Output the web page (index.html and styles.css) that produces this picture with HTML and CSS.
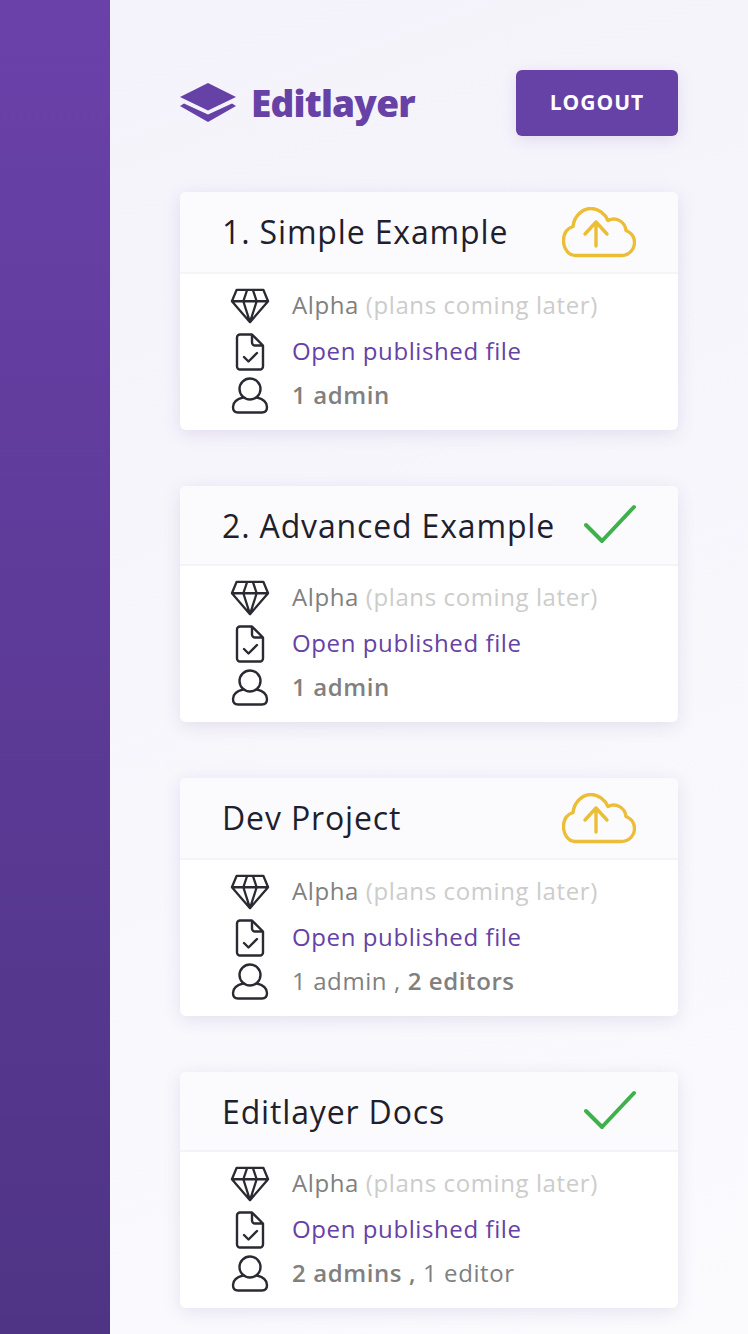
FILE: index.html
```html
<!DOCTYPE html>
<html lang="en">
<head>
    <meta charset="UTF-8">
    <meta name="viewport" content="width=device-width, initial-scale=1.0">
    <title>Editlayer</title>
    <link rel="stylesheet" href="styles.css">
</head>
<body>
    <svg class="defs" width="0" height="0">
        <symbol id="gem" viewBox="0 0 42 38">
            <path d="M7 2h28l5 12-19 22L2 14z M2 14h38 M14 14l7 22 7-22 M14 14l4-12 M28 14l-4-12" fill="none" stroke="currentColor" stroke-width="2.400" stroke-linejoin="round"/>
        </symbol>
        <symbol id="file" viewBox="0 0 30 38">
            <path d="M5 1.500h12l11 11v21a3 3 0 0 1-3 3H5a3 3 0 0 1-3-3v-29a3 3 0 0 1 3-3z M17 1.500v8a3 3 0 0 0 3 3h8" fill="none" stroke="currentColor" stroke-width="2.400" stroke-linejoin="round"/>
            <path d="M9 24l4.500 4.500L22 20" fill="none" stroke="currentColor" stroke-width="2.400" stroke-linecap="round" stroke-linejoin="round"/>
        </symbol>
        <symbol id="user" viewBox="0 0 38 37">
            <circle cx="19" cy="12" r="10.500" fill="none" stroke="currentColor" stroke-width="2.400"/>
            <path d="M12 20.500C6 22 2 25 2 30c0 3.500 2 5.500 5 5.500h24c3 0 5-2 5-5.500 0-5-4-8-10-9.500" fill="none" stroke="currentColor" stroke-width="2.400" stroke-linecap="round"/>
        </symbol>
        <symbol id="cloud" viewBox="0 0 74 52">
            <path d="M13 48.500h46c8 0 13.500-6 13.500-13 0-6-3.500-10-8.500-12-1-9-10-14-18-10-3-7-10-12-17-12-9 0-17 8-18 18-6 2-9.500 7-9.500 14 0 8 5 15 11.500 15z" fill="none" stroke="currentColor" stroke-width="3.400" stroke-linejoin="round"/>
            <path d="M34 39V15 M23 27l11-12 11 12" fill="none" stroke="currentColor" stroke-width="3.400" stroke-linecap="round" stroke-linejoin="round"/>
        </symbol>
        <symbol id="check" viewBox="0 0 52 40">
            <path d="M2 21l16 16L50 3" fill="none" stroke="currentColor" stroke-width="4" stroke-linecap="round" stroke-linejoin="round"/>
        </symbol>
    </svg>

    <div class="layout">
        <aside class="sidebar"></aside>
        <main class="main">
            <header class="topbar">
                <div class="logo">
                    <svg class="logo-icon" viewBox="0 0 56 40">
                        <path d="M28 0l28 14-28 13.500L0 14z" fill="#6641a6"/>
                        <path d="M0 23l4-2.500 24 11 24-11 4 2.500-28 16z" fill="#6641a6"/>
                    </svg>
                    <span class="logo-text">Editlayer</span>
                </div>
                <button class="logout">LOGOUT</button>
            </header>

            <section class="card">
                <div class="card-head head-tall">
                    <h2>1. Simple Example</h2>
                    <svg class="status cloud"><use href="#cloud"/></svg>
                </div>
                <div class="card-body">
                    <div class="row"><span class="icon"><svg class="i-gem"><use href="#gem"/></svg></span><span class="plan">Alpha <span class="muted">(plans coming later)</span></span></div>
                    <div class="row"><span class="icon"><svg class="i-file"><use href="#file"/></svg></span><a class="link" href="#">Open published file</a></div>
                    <div class="row last"><span class="icon"><svg class="i-user"><use href="#user"/></svg></span><span class="people"><b>1 admin</b></span></div>
                </div>
            </section>

            <section class="card">
                <div class="card-head">
                    <h2>2. Advanced Example</h2>
                    <svg class="status check"><use href="#check"/></svg>
                </div>
                <div class="card-body">
                    <div class="row"><span class="icon"><svg class="i-gem"><use href="#gem"/></svg></span><span class="plan">Alpha <span class="muted">(plans coming later)</span></span></div>
                    <div class="row"><span class="icon"><svg class="i-file"><use href="#file"/></svg></span><a class="link" href="#">Open published file</a></div>
                    <div class="row last"><span class="icon"><svg class="i-user"><use href="#user"/></svg></span><span class="people"><b>1 admin</b></span></div>
                </div>
            </section>

            <section class="card">
                <div class="card-head head-tall">
                    <h2>Dev Project</h2>
                    <svg class="status cloud"><use href="#cloud"/></svg>
                </div>
                <div class="card-body">
                    <div class="row"><span class="icon"><svg class="i-gem"><use href="#gem"/></svg></span><span class="plan">Alpha <span class="muted">(plans coming later)</span></span></div>
                    <div class="row"><span class="icon"><svg class="i-file"><use href="#file"/></svg></span><a class="link" href="#">Open published file</a></div>
                    <div class="row last"><span class="icon"><svg class="i-user"><use href="#user"/></svg></span><span class="people">1 admin , <b>2 editors</b></span></div>
                </div>
            </section>

            <section class="card">
                <div class="card-head">
                    <h2>Editlayer Docs</h2>
                    <svg class="status check"><use href="#check"/></svg>
                </div>
                <div class="card-body">
                    <div class="row"><span class="icon"><svg class="i-gem"><use href="#gem"/></svg></span><span class="plan">Alpha <span class="muted">(plans coming later)</span></span></div>
                    <div class="row"><span class="icon"><svg class="i-file"><use href="#file"/></svg></span><a class="link" href="#">Open published file</a></div>
                    <div class="row last"><span class="icon"><svg class="i-user"><use href="#user"/></svg></span><span class="people"><b>2 admins ,</b> 1 editor</span></div>
                </div>
            </section>
        </main>
    </div>
</body>
</html>
```
FILE: styles.css
```css
* {
    box-sizing: border-box;
}

body {
    margin: 0;
    height: 1334px;
    overflow: hidden;
    font-family: "Open Sans", sans-serif;
    color: #1f1f2e;
    background: linear-gradient(160deg, #f4f2fa 0%, #fbfbfe 100%);
}

.defs {
    position: absolute;
}

.layout {
    display: flex;
    height: 1334px;
}

.sidebar {
    width: 110px;
    flex-shrink: 0;
    background: linear-gradient(180deg, #6a41a9 0%, #4f3485 100%);
}

.main {
    flex: 1;
    padding: 70px 70px 0;
}

.topbar {
    display: flex;
    justify-content: space-between;
    align-items: center;
    margin-bottom: 56px;
}

.logo {
    display: flex;
    align-items: center;
    gap: 15px;
}

.logo-icon {
    width: 56px;
    height: 40px;
}

.logo-text {
    font-size: 37px;
    font-weight: 800;
    letter-spacing: -0.800px;
    line-height: 44px;
    color: #6641a6;
}

.logout {
    width: 162px;
    height: 66px;
    padding: 0 0 2px;
    background: #6641a6;
    color: white;
    border: none;
    border-radius: 6px;
    font-family: inherit;
    font-size: 21px;
    font-weight: 700;
    letter-spacing: 1px;
    box-shadow: 0 4px 16px rgba(70, 50, 130, 0.12);
}

.card {
    background: white;
    border-radius: 6px;
    margin-bottom: 56px;
    box-shadow: 0 4px 18px rgba(70, 50, 130, 0.12);
    overflow: hidden;
}

.card-head {
    display: flex;
    justify-content: space-between;
    align-items: center;
    height: 80px;
    padding: 2px 42px 0;
    background: #fbfbfe;
    border-bottom: 2px solid #f3f3f8;
}

.head-tall {
    height: 82px;
    padding-top: 0;
}

.card-head h2 {
    margin: 0;
    font-size: 32px;
    font-weight: 400;
    letter-spacing: 0.850px;
    line-height: 44px;
    color: #1f1f2e;
}

.status {
    display: block;
}

.cloud {
    width: 74px;
    height: 52px;
    margin-top: 2px;
    color: #ecbd36;
}

.check {
    width: 52px;
    height: 40px;
    margin-bottom: 4px;
    color: #3fb14c;
}

.card-body {
    padding: 7px 0 15px 50px;
}

.row {
    display: flex;
    align-items: center;
    height: 46px;
    font-size: 24px;
    letter-spacing: 0.600px;
    color: #808080;
}

.row.last {
    height: 42px;
}

.icon {
    width: 40px;
    margin-right: 22px;
    padding-top: 3px;
    display: flex;
    justify-content: center;
    color: #2a2a33;
}

.i-gem {
    width: 42px;
    height: 38px;
}

.i-file {
    width: 30px;
    height: 38px;
}

.i-user {
    width: 38px;
    height: 37px;
}

.muted {
    color: #cccccc;
}

.link {
    color: #6641a6;
    text-decoration: none;
}

.people b {
    font-weight: 600;
}
```
